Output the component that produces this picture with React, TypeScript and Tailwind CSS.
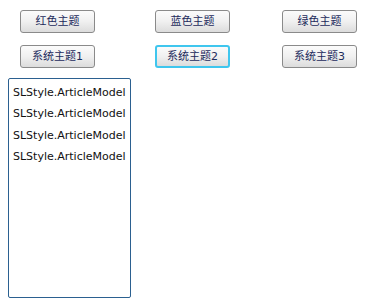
import React from 'react';

const themes = [
  ['红色主题', '蓝色主题', '绿色主题'],
  ['系统主题1', '系统主题2', '系统主题3'],
];

const items = ['SLStyle.ArticleModel', 'SLStyle.ArticleModel', 'SLStyle.ArticleModel', 'SLStyle.ArticleModel'];

function ThemeButton({ label, focused }: { label: string; focused?: boolean }) {
  return (
    <button
      className={`h-[23px] w-[75px] rounded-[3px] border bg-gradient-to-b from-[#fbfbfb] via-[#f0f0f0] to-[#dcdcdc] text-[11px] leading-none text-[#1c2a5c] ${
        focused ? 'border-2 border-[#3fc6ee]' : 'border-[#8a8a8a]'
      }`}
    >
      {label}
    </button>
  );
}

export default function App() {
  return (
    <div
      className="w-[374px] h-[308px] bg-white pt-[10px]"
      style={{ fontFamily: '"DejaVu Sans", "Noto Sans CJK SC", sans-serif' }}
    >
      <div className="flex flex-col gap-[12px] pl-[20px]">
        {themes.map((row, r) => (
          <div key={r} className="grid grid-cols-[135px_127px_75px]">
            {row.map((t, i) => (
              <ThemeButton key={t} label={t} focused={r === 1 && i === 1} />
            ))}
          </div>
        ))}
      </div>

      <div className="ml-[8px] mt-[10px] h-[220px] w-[123px] rounded-[2px] border border-[#2b6090] px-[4px] pt-[3px]">
        {items.map((it, i) => (
          <div key={i} className="h-[21.5px] flex items-center text-[11px] text-[#111]" style={{ fontFamily: '"DejaVu Sans", sans-serif' }}>
            {it}
          </div>
        ))}
      </div>
    </div>
  );
}
